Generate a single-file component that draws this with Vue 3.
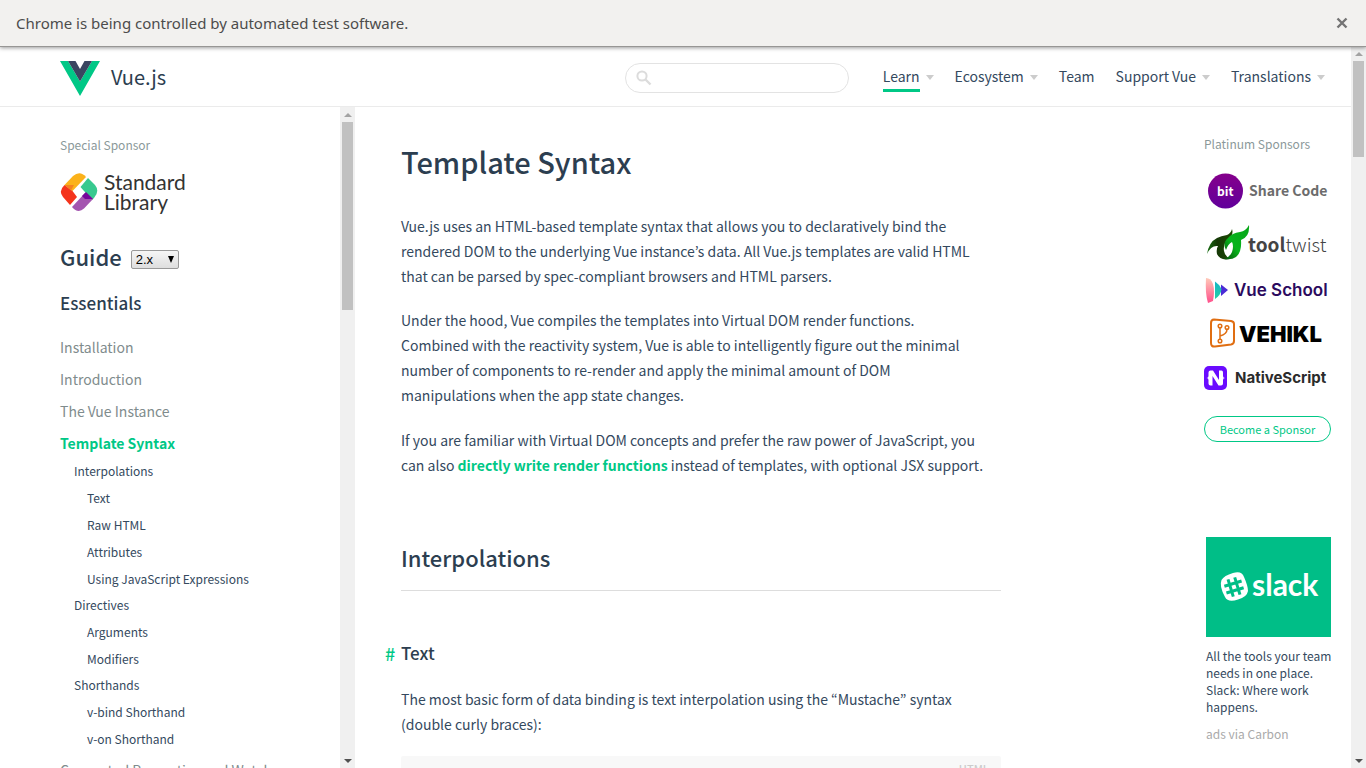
<script setup>
import { ref } from 'vue'

const query = ref('')
const version = ref('2.x')

const nav = [
  { label: 'Learn', menu: true, current: true },
  { label: 'Ecosystem', menu: true },
  { label: 'Team', menu: false },
  { label: 'Support Vue', menu: true },
  { label: 'Translations', menu: true }
]

const before = ['Installation', 'Introduction', 'The Vue Instance']

const sections = [
  { title: 'Interpolations', items: ['Text', 'Raw HTML', 'Attributes', 'Using JavaScript Expressions'] },
  { title: 'Directives', items: ['Arguments', 'Modifiers'] },
  { title: 'Shorthands', items: ['v-bind Shorthand', 'v-on Shorthand'] }
]
</script>

<template>
  <div class="window">
    <div class="infobar">
      <span>Chrome is being controlled by automated test software.</span>
      <button class="close" aria-label="Close">
        <svg width="12" height="12" viewBox="0 0 12 12"><path d="M1.5 1.5l9 9M10.5 1.5l-9 9" stroke="#747474" stroke-width="2.4" fill="none" /></svg>
      </button>
    </div>

    <div class="viewport">
      <div class="page">
        <header class="header">
          <a class="logo" href="#">
            <svg width="40" height="35" viewBox="0 0 40 35">
              <path d="M0 0h8l12 20.500L32 0h8L20 35z" fill="#00c886" />
              <path d="M8 0h7.500L20 8l4.500-8H32L20 20.500z" fill="#3a4560" />
            </svg>
            <span>Vue.js</span>
          </a>
          <label class="search">
            <svg width="16" height="16" viewBox="0 0 16 16" fill="none" stroke="#dcdcdc"><circle cx="6" cy="6" r="4.600" stroke-width="2" /><path d="M9.500 9.500l5 5" stroke-width="2.400" /></svg>
            <input v-model="query" type="text" aria-label="Search" />
          </label>
          <nav class="nav">
            <a v-for="n in nav" :key="n.label" href="#" :class="{ current: n.current, menu: n.menu }"><span>{{ n.label }}</span></a>
          </nav>
        </header>

        <div class="body">
          <aside class="sidebar">
            <p class="caption">Special Sponsor</p>
            <a class="stdlib" href="#" aria-label="Standard Library">
              <svg width="38" height="40" viewBox="0 0 38 40">
                <path d="M4.500 13L13 4Q20-2 26 5L12.500 19z" fill="#fbb21a" />
                <path d="M4.500 13L12.500 19L17 25L10 33L3 25Q-2 19 4.500 13z" fill="#f4341c" />
                <path d="M4.500 13h9.500l-3 5.500z" fill="#f58220" />
                <path d="M28 6L35 13Q40 19 34 26L32 28L20.500 15z" fill="#38c98f" />
                <path d="M12 35L25 21L33 27L24 36.500Q18 42 12 35z" fill="#a455b0" />
                <path d="M26 20l7 7h-8l-3-3z" fill="#76069a" />
              </svg>
              <span>Standard<br />Library</span>
            </a>
            <h2 class="guide">
              <label for="version">Guide</label>
              <span class="select"><select id="version" v-model="version"><option>2.x</option><option>1.0</option></select></span>
            </h2>
            <h3 class="group">Essentials</h3>
            <ul class="menu-root">
              <li v-for="b in before" :key="b"><a href="#">{{ b }}</a></li>
              <li>
                <a href="#" class="active">Template Syntax</a>
                <ul class="sub">
                  <li v-for="s in sections" :key="s.title">
                    <a href="#" class="section">{{ s.title }}</a>
                    <ul class="leaf">
                      <li v-for="i in s.items" :key="i"><a href="#">{{ i }}</a></li>
                    </ul>
                  </li>
                </ul>
              </li>
              <li><a href="#">Computed Properties and Watchers</a></li>
            </ul>
          </aside>
          <div class="scrollbar side" aria-hidden="true"><i class="up"></i><b></b><i class="down"></i></div>

          <main class="content">
            <article>
              <h1>Template Syntax</h1>
              <p>Vue.js uses an HTML-based template syntax that allows you to declaratively bind the rendered DOM to the underlying Vue instance’s data. All Vue.js templates are valid HTML that can be parsed by spec-compliant browsers and HTML parsers.</p>
              <p>Under the hood, Vue compiles the templates into Virtual DOM render functions. Combined with the reactivity system, Vue is able to intelligently figure out the minimal number of components to re-render and apply the minimal amount of DOM manipulations when the app state changes.</p>
              <p>If you are familiar with Virtual DOM concepts and prefer the raw power of JavaScript, you can also <a href="#">directly write render functions</a> instead of templates, with optional JSX support.</p>
              <h2>Interpolations</h2>
              <h3><a href="#" class="hash">#</a>Text</h3>
              <p>The most basic form of data binding is text interpolation using the “Mustache” syntax (double curly braces):</p>
              <figure><figcaption>HTML</figcaption></figure>
            </article>
          </main>

          <aside class="sponsors">
            <p class="caption">Platinum Sponsors</p>
            <a class="s-bit" href="#"><svg width="127" height="38" viewBox="0 0 127 38">
              <defs><linearGradient id="bit" x2="0" y2="1"><stop stop-color="#85008b" /><stop offset="1" stop-color="#61009b" /></linearGradient></defs>
              <circle cx="21.500" cy="19" r="17.500" fill="url(#bit)" />
              <text x="13" y="24" class="t-bit">bit</text>
              <text x="45" y="24" class="t-share">Share Code</text>
            </svg></a>
            <a class="s-tool" href="#"><svg width="127" height="38" viewBox="0 0 127 38">
              <defs>
                <linearGradient id="leafA" x1="0" x2="1"><stop stop-color="#176f12" /><stop offset=".4" stop-color="#163807" /><stop offset="1" stop-color="#1c4a00" /></linearGradient>
                <linearGradient id="leafB" x1="1" y1="0" x2="0" y2="1"><stop stop-color="#05a516" /><stop offset=".6" stop-color="#08b41c" /><stop offset="1" stop-color="#064f08" /></linearGradient>
              </defs>
              <path d="M3 31Q5 19 13 15Q17 13 23 12Q27 10 28 6Q30 12 24 16Q19 21 20 28Q21 33 26 36Q16 38 13 31Q12 26 14 23Q7 22 3 31z" fill="url(#leafA)" />
              <path d="M45 2Q46 14 37 17Q38 29 32 34Q28 37 20 36Q26 34 28 29Q30 23 28 19Q24 21 22 27Q18 20 24 15Q28 10 36 9Q42 8 45 2z" fill="url(#leafB)" />
              <text x="44" y="29" class="t-tool"><tspan class="b">tool</tspan><tspan class="l">twist</tspan></text>
            </svg></a>
            <a class="s-school" href="#"><svg width="127" height="38" viewBox="0 0 127 38">
              <defs>
                <linearGradient id="vsA" x2="0" y2="1"><stop stop-color="#ffc9b8" /><stop offset="1" stop-color="#ff4f8b" /></linearGradient>
                <linearGradient id="vsB" x2="0" y2="1"><stop stop-color="#16b6c6" /><stop offset="1" stop-color="#24cfa5" /></linearGradient>
              </defs>
              <path d="M17 13.500L24 19 17 25z" fill="#4b2bd6" />
              <path d="M11 10.500Q15 13 17.500 18Q17 24 11 28z" fill="url(#vsB)" />
              <path d="M2 7Q7 7 9 13Q11 20 9 30L4 32Q1 22 2 7z" fill="url(#vsA)" />
              <text x="30" y="25" class="t-school">Vue School</text>
            </svg></a>
            <a class="s-vehikl" href="#"><svg width="127" height="38" viewBox="0 0 127 38">
              <path d="M10 6.500L27 8Q30 8.500 30 11V28Q30 31 27 31.500L11 33.500Q7 34 7 30V10Q7 6.500 10 6.500z" fill="none" stroke="#e06e12" stroke-width="2" />
              <g fill="none" stroke="#e06e12" stroke-width="1.500"><circle cx="16" cy="13" r="1.800" /><circle cx="16" cy="28" r="1.800" /><circle cx="23" cy="14.500" r="1.800" /><path d="M16 15v11M23 16.500q0 4.500-7 6.500" /></g>
              <text x="35" y="29" class="t-vehikl">VEHIKL</text>
            </svg></a>
            <a class="s-native" href="#"><svg width="127" height="38" viewBox="0 0 127 38">
              <rect x="0" y="7" width="23" height="24" rx="5" fill="#6a0bff" />
              <path d="M2.500 19q2 0 2-2v-3.500q0-2 2-2H9l6 9.500v-9.500h2.500q1.500 0 1.500 2V17q0 2 2 2q-2 0-2 2v3.500q0 2-2 2H14.500L8.500 17v9.500H6.500q-2 0-2-2V21q0-2-2-2z" fill="#fff" />
              <text x="31" y="24" class="t-native">NativeScript</text>
            </svg></a>
            <a class="become" href="#">Become a Sponsor</a>

            <div class="ad">
              <a href="#" class="banner" aria-label="Slack"><svg width="125" height="100" viewBox="0 0 125 100">
                <path d="M15.500 43Q18 38.500 27 36Q36 33.500 38 40Q42 49 42 54Q41 60 32 62.500Q22 66 19 60Q13 49 15.500 43z" fill="#fff" />
                <g transform="rotate(-17 28 50)" stroke="#00be87" stroke-width="3"><path d="M24.500 41v18M31.500 41v18M19 46.500h18M19 53.500h18" /></g>
                <text x="46" y="59" class="t-slack">slack</text>
              </svg></a>
              <a href="#" class="copy">All the tools your team needs in one place. Slack: Where work happens.</a>
              <a href="#" class="via">ads via Carbon</a>
            </div>
          </aside>
        </div>
      </div>
      <div class="scrollbar main" aria-hidden="true"><i class="up"></i><b></b><i class="down"></i></div>
    </div>
  </div>
</template>

<style>
body { margin: 0; background: #fff; }
</style>

<style scoped>
* { box-sizing: border-box; }
.window { height: 100vh; overflow: hidden; display: flex; flex-direction: column; font-family: "Noto Sans CJK KR", "Source Sans Pro", sans-serif; font-size: 14px; color: #34495e; }
a { color: inherit; text-decoration: none; }
ul { list-style: none; margin: 0; padding: 0; }
svg { display: block; }
.infobar { flex: none; height: 47px; display: flex; align-items: center; justify-content: space-between; padding: 0 18px 0 16px; background: #f2f1ef; border-bottom: 1px solid #979694; box-shadow: 0 1px 4px rgba(0, 0, 0, .4); font: 15px/24px "Noto Sans", sans-serif; color: #4c4c4c; position: relative; z-index: 2; }
.close { border: 0; background: none; padding: 0; }
.viewport { flex: 1; min-height: 0; display: flex; }
.page { flex: 1; min-width: 0; display: flex; flex-direction: column; }
.header { flex: none; height: 60px; display: flex; align-items: center; padding: 2px 26px 0 60px; border-bottom: 1px solid #ebebeb; }
.logo { display: flex; align-items: flex-start; gap: 11px; margin-right: auto; font-size: 20px; line-height: 35px; color: #2c3e50; }
.logo svg { margin-top: 2px; }
.search { display: flex; align-items: center; width: 224px; height: 30px; border: 1px solid #e3e3e3; border-radius: 15px; padding: 0 10px; margin-right: 34px; }
.search input { flex: 1; min-width: 0; border: 0; outline: 0; background: none; font: inherit; }
.nav { display: flex; gap: 21px; font-size: 14px; line-height: 26px; }
.nav a { display: flex; align-items: center; gap: 6px; }
.nav span { border-bottom: 3px solid transparent; }
.nav .current span { border-color: #00c886; }
.nav .menu::after { content: ""; border: 4px solid transparent; border-top: 5px solid #ccc; border-bottom: 0; }
.body { flex: 1; min-height: 0; display: flex; overflow: hidden; }
.sidebar { flex: none; width: 340px; padding: 28px 0 0 60px; overflow: hidden; }
.caption { margin: 0; font-size: 12px; line-height: 20px; color: #8b999a; }
.stdlib { display: flex; gap: 6px; margin-top: 17px; font: 21px/20px Lato, sans-serif; color: #333; height: 42px; }
.guide { display: flex; align-items: center; gap: 9px; margin: 24px 0 0; font-size: 22px; line-height: 36px; font-weight: 500; color: #2c3e50; }
.select { display: flex; position: relative; margin-top: 6px; }
.select::after { content: ""; position: absolute; right: 5px; top: 6px; border: 3px solid transparent; border-top: 7px solid #000; border-bottom: 0; pointer-events: none; }
.select select { appearance: none; width: 48px; height: 19px; border: 1px solid #999; border-radius: 2px; padding: 0 4px; background: linear-gradient(#f6f6f6, #dedede); font: 13px/17px "Liberation Sans", sans-serif; color: #000; }
.group { margin: 17px 0 0; font-size: 17px; line-height: 24px; font-weight: 500; color: #2c3e50; }
.menu-root { margin-top: 16px; white-space: nowrap; }
.menu-root a { display: block; line-height: 32px; color: #7f8c8d; }
.menu-root .active { color: #00c886; font-weight: 700; }
.menu-root .sub { margin: -1px 0 2px; padding-left: 14px; }
.menu-root .sub a { font-size: 12px; line-height: 27px; color: #34495e; }
.menu-root .sub .section { line-height: 26px; }
.leaf { padding-left: 13px; }
.scrollbar { flex: none; width: 15px; background: #f0f0f0; display: flex; flex-direction: column; align-items: center; }
.scrollbar b { width: 11px; background: #c1c1c1; }
.scrollbar.side b { height: 188px; }
.scrollbar.main b { height: 96px; }
.scrollbar i { height: 15px; display: flex; align-items: center; }
.scrollbar.main .up { height: 14px; }
.scrollbar i::before { content: ""; border: 4px solid transparent; }
.scrollbar .up::before { border-top: 0; border-bottom-color: #a3a3a3; }
.scrollbar .down { margin-top: auto; }
.scrollbar .down::before { border-bottom: 0; border-top-color: #505050; }
.content { flex: 1; min-width: 0; padding: 31px 46px 0; overflow: hidden; }
article { max-width: 600px; font-size: 14px; }
article p { max-width: 583px; margin: 0 0 19px; line-height: 25px; }
article p + p { margin-bottom: 20px; }
article p a { color: #00c886; font-weight: 700; }
h1, article h2, article h3 { font-weight: 500; color: #2c3e50; }
h1 { margin: 0 0 30px; font-size: 29px; line-height: 46px; }
article h2 { margin: 61px 0 49px; padding-bottom: 15px; font-size: 22px; line-height: 36px; border-bottom: 1px solid #ddd; }
article h3 { margin: 0 0 21px; font-size: 17px; line-height: 26px; position: relative; }
.hash { position: absolute; left: -16px; color: #00c886; font-size: 18px; font-weight: 500; }
figure { margin: 0; height: 100px; padding: 3px 12px; background: #f8f8f8; border-radius: 2px; text-align: right; }
figcaption { font-size: 11px; line-height: 20px; font-weight: 500; color: #ccc; }
.sponsors { flex: none; width: 147px; padding: 27px 20px 0 0; display: flex; flex-direction: column; }
.s-bit { margin: 18px 0 13px; }
.s-tool { margin-bottom: 10px; }
.s-school { margin-bottom: 4px; }
.s-vehikl, .s-native { margin-bottom: 8px; }
.sponsors .become { margin: 11px 0 0; border: 1px solid #00c886; border-radius: 13px; height: 26px; line-height: 24px; font-size: 11px; text-align: center; color: #00c886; }
.ad { margin: 95px -6px 0 2px; font-size: 12px; line-height: 17px; }
.ad a { display: block; }
.ad .banner { width: 125px; background: #00be87; }
.ad .copy { margin: 10px 0; }
.via { color: #aaa; }
.t-bit { font: 700 12px "Noto Sans CJK KR", sans-serif; fill: #fff; }
.t-share { font: 700 14px "Noto Sans CJK KR", sans-serif; fill: #6c6c6c; }
.t-tool { font-family: "Noto Sans CJK KR", sans-serif; font-size: 19px; fill: #444; }
.t-tool .b { font-weight: 700; }
.t-tool .l { font-weight: 300; }
.t-school { font: 600 17px Inter, sans-serif; fill: #2b0a5e; }
.t-vehikl { font: 900 22px Inter, sans-serif; fill: #000; }
.t-native { font: 700 15px Inter, sans-serif; fill: #2b2b2b; }
.t-slack { font: 700 30px Lato, sans-serif; fill: #fff; }
</style>
